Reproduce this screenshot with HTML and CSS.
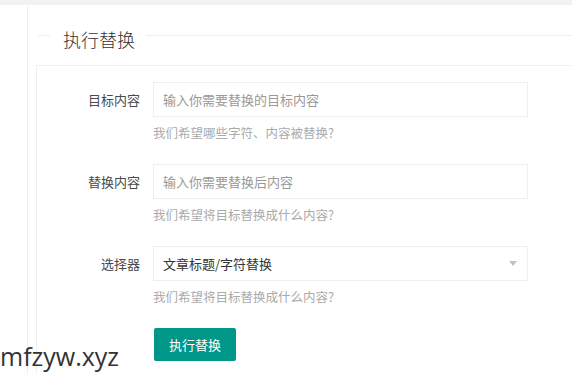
FILE: index.html
```html
<!DOCTYPE html>
<html lang="zh-CN">
<head>
<meta charset="utf-8">
<link rel="stylesheet" href="styles.css">
</head>
<body>
<div class="topbar"></div>
<div class="page">
  <div class="card">
    <div class="legend-row">
      <span class="legend-line short"></span>
      <span class="legend">执行替换</span>
      <span class="legend-line long"></span>
    </div>
    <div class="box">
      <div class="form-item">
        <div class="row">
          <label class="label">目标内容</label>
          <div class="input placeholder">输入你需要替换的目标内容</div>
        </div>
        <div class="help">我们希望哪些字符、内容被替换?</div>
      </div>
      <div class="form-item">
        <div class="row">
          <label class="label">替换内容</label>
          <div class="input placeholder">输入你需要替换后内容</div>
        </div>
        <div class="help">我们希望将目标替换成什么内容?</div>
      </div>
      <div class="form-item">
        <div class="row">
          <label class="label">选择器</label>
          <div class="input select">文章标题/字符替换<span class="arrow"></span></div>
        </div>
        <div class="help">我们希望将目标替换成什么内容?</div>
      </div>
      <div class="actions">
        <button class="btn">执行替换</button>
      </div>
    </div>
  </div>
</div>
<div class="watermark">mfzyw.xyz</div>
</body>
</html>
```
FILE: styles.css
```css
html, body {
  margin: 0;
  padding: 0;
  background: #fff;
  font-family: "Noto Sans CJK SC", "Noto Sans", sans-serif;
  height: 374px;
  overflow: hidden;
}
.topbar {
  height: 5px;
  background: #f2f2f2;
}
.page {
  padding-left: 27px;
  height: 369px;
}
.card {
  border-left: 1px solid #eeeeee;
  height: 100%;
  padding-left: 8px;
  display: flex;
  flex-direction: column;
}
.legend-row {
  display: flex;
  align-items: center;
  height: 60px;
  flex: none;
  padding-left: 2px;
}
.legend-line {
  height: 1px;
  background: #eeeeee;
}
.legend-line.short {
  width: 12px;
}
.legend-line.long {
  flex: 1;
}
.legend {
  font-size: 18px;
  font-weight: 300;
  color: #333;
  padding: 0 11px 0 13px;
  line-height: 24px;
  position: relative;
  top: 4px;
}
.box {
  flex: 1;
  border-top: 1px solid #f0f0f0;
  border-left: 1px solid #f0f0f0;
  padding-top: 16px;
}
.form-item {
  margin-bottom: 22px;
}
.row {
  display: flex;
  align-items: center;
}
.label {
  flex: none;
  width: 116px;
  padding-right: 13px;
  box-sizing: border-box;
  text-align: right;
  font-size: 13px;
  color: #4a4a4a;
  line-height: 35px;
}
.input {
  flex: none;
  width: 375px;
  height: 35px;
  box-sizing: border-box;
  border: 1px solid #eeeeee;
  padding-left: 9px;
  font-size: 13px;
  line-height: 33px;
  color: #333;
  position: relative;
  background: #fff;
}
.placeholder {
  color: #999;
}
.arrow {
  position: absolute;
  right: 10px;
  top: 14px;
  width: 0;
  height: 0;
  border-left: 4px solid transparent;
  border-right: 4px solid transparent;
  border-top: 5px solid #c2c2c2;
}
.help {
  margin-left: 116px;
  margin-top: 7px;
  font-size: 12.5px;
  line-height: 18px;
  color: #aaa;
}
.actions {
  padding-left: 117px;
}
.btn {
  width: 82px;
  height: 33px;
  border: none;
  border-radius: 2px;
  background: #009688;
  color: #fff;
  font-family: "Noto Sans CJK SC", "Noto Sans", sans-serif;
  font-size: 13px;
  padding: 0;
}
.watermark {
  position: absolute;
  left: 0;
  top: 341px;
  font-family: "Open Sans", sans-serif;
  font-size: 25px;
  color: #333;
  line-height: 30px;
}
```
